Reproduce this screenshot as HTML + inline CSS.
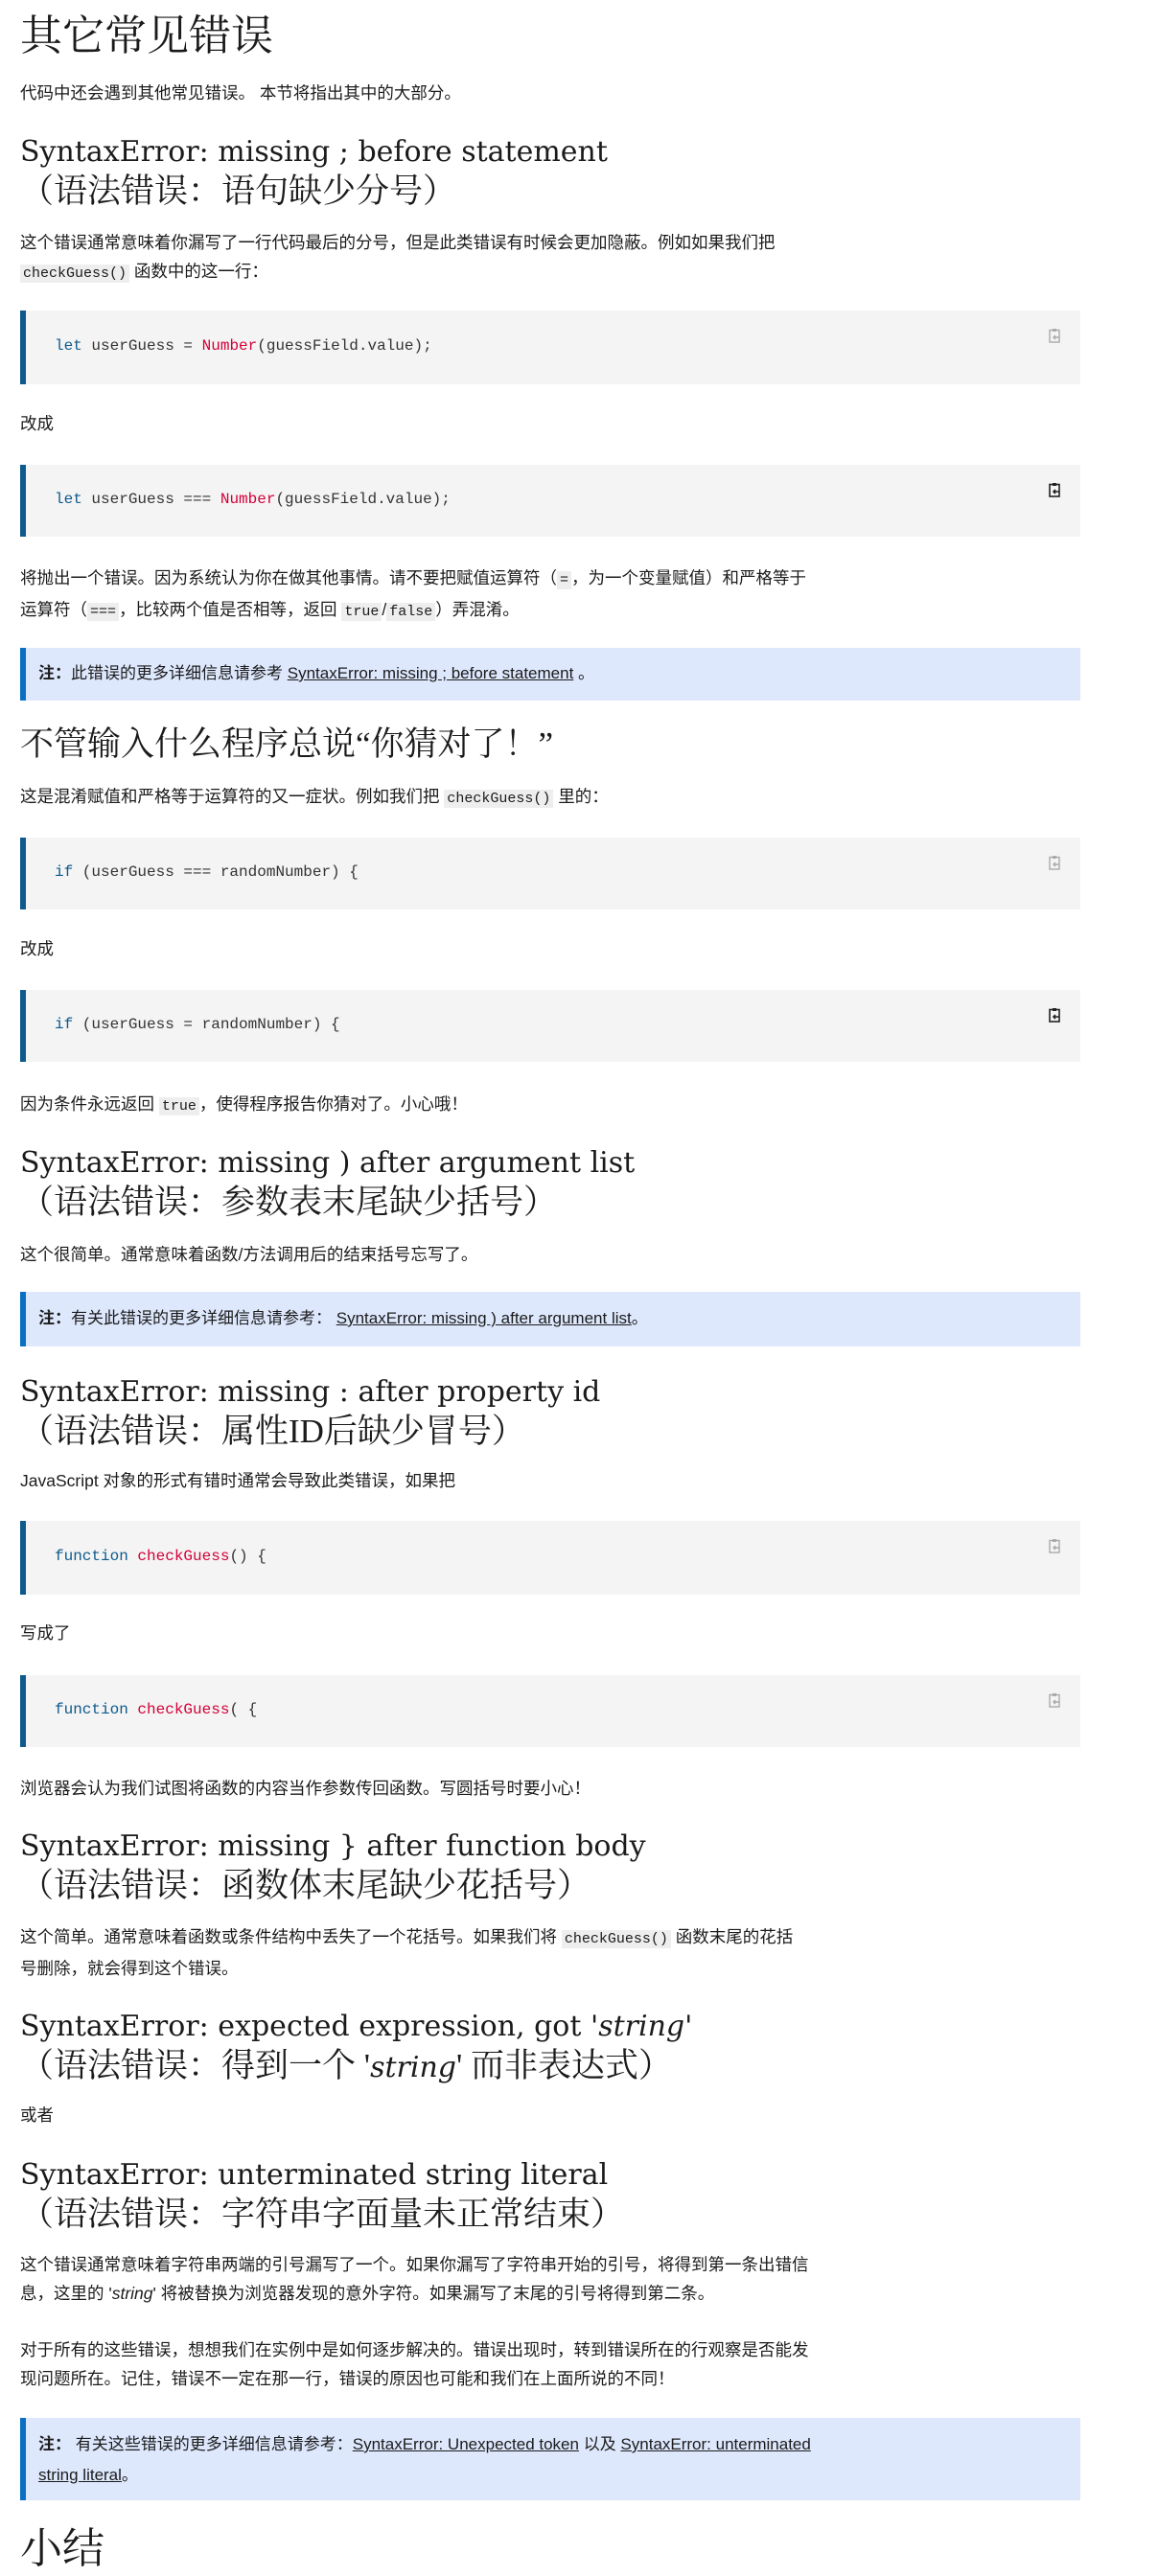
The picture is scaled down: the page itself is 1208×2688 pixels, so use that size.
<!DOCTYPE html>
<html><head><meta charset="utf-8">
<style>
*{margin:0;padding:0;box-sizing:border-box}
body{width:1208px;height:2674px;position:relative;background:#fff;overflow:hidden;color:#1b1b1b;font-family:"Liberation Sans","Noto Sans CJK SC",sans-serif}
.a{position:absolute;left:21px;white-space:nowrap}
.p{font-size:17.5px;line-height:30px}
.h2{font-family:"DejaVu Serif","Noto Serif CJK SC",serif;font-size:30px;line-height:41px;color:#1b1b1b}
.h2 .c{font-family:"Liberation Serif","Noto Serif CJK SC",serif;font-size:35px}
.h2 .c i{font-family:"DejaVu Serif",serif;font-size:30px}
.h1{font-family:"Liberation Serif","Noto Serif CJK SC",serif;font-size:44px;line-height:56px}
.code{position:absolute;left:21px;width:1106px;background:#f4f4f4;border-left:6px solid #0e5a8c}
.code span.t{position:absolute;left:30px;font-family:"Liberation Mono",monospace;font-size:16px;white-space:pre;color:#333}
.k{color:#0e5a8c}.r{color:#d30038}.f{color:#d30038}
.ic{position:absolute;right:21px;top:18px}
.note{position:absolute;left:21px;width:1106px;background:#dee8fd;border-left:6px solid #0a6fc2;font-size:17px;line-height:32px;padding-left:13px}
.note a{color:#1b1b1b;text-decoration:underline}
code{font-family:"Liberation Mono",monospace;font-size:15px;background:#eee;padding:1px 3px}
</style></head><body>

<div class="a h1" style="top:10px">其它常见错误</div>
<div class="a p" style="top:82px">代码中还会遇到其他常见错误。 本节将指出其中的大部分。</div>

<div class="a h2" style="top:138px">SyntaxError: missing ; before statement<br><span class="c">（语法错误：语句缺少分号）</span></div>
<div class="a p" style="top:238px">这个错误通常意味着你漏写了一行代码最后的分号，但是此类错误有时候会更加隐蔽。例如如果我们把<br><code>checkGuess()</code> 函数中的这一行：</div>

<div class="code" style="top:324px;height:77px"><span class="t" style="top:28px"><span class="k">let</span> userGuess = <span class="r">Number</span>(guessField.value);</span>
<svg class="ic" width="12" height="16" viewBox="0 0 12 16"><rect x="1" y="2.5" width="10" height="12.5" fill="none" stroke="#aaa" stroke-width="1.4"/><rect x="4" y="1" width="4" height="3" fill="#aaa"/><path d="M11 10H5M7 8l-2 2 2 2" stroke="#aaa" stroke-width="1.4" fill="none"/></svg></div>

<div class="a p" style="top:427px">改成</div>

<div class="code" style="top:485px;height:75px"><span class="t" style="top:27px"><span class="k">let</span> userGuess === <span class="r">Number</span>(guessField.value);</span>
<svg class="ic" width="12" height="16" viewBox="0 0 12 16"><rect x="1" y="2.5" width="10" height="12.5" fill="none" stroke="#222" stroke-width="1.6"/><rect x="4" y="1" width="4" height="3" fill="#222"/><path d="M11 10H5M7 8l-2 2 2 2" stroke="#222" stroke-width="1.6" fill="none"/></svg></div>

<div class="a p" style="top:588px">将抛出一个错误。因为系统认为你在做其他事情。请不要把赋值运算符（<code>=</code>，为一个变量赋值）和严格等于<br>运算符（<code>===</code>，比较两个值是否相等，返回 <code>true</code>/<code>false</code>）弄混淆。</div>

<div class="note" style="top:676px;height:55px;padding-top:11px"><b>注：</b>此错误的更多详细信息请参考 <a>SyntaxError: missing ; before statement</a> 。</div>

<div class="a h2" style="top:756px"><span class="c">不管输入什么程序总说“你猜对了！”</span></div>
<div class="a p" style="top:816px">这是混淆赋值和严格等于运算符的又一症状。例如我们把 <code>checkGuess()</code> 里的：</div>

<div class="code" style="top:874px;height:75px"><span class="t" style="top:27px"><span class="k">if</span> (userGuess === randomNumber) {</span>
<svg class="ic" width="12" height="16" viewBox="0 0 12 16"><rect x="1" y="2.5" width="10" height="12.5" fill="none" stroke="#aaa" stroke-width="1.4"/><rect x="4" y="1" width="4" height="3" fill="#aaa"/><path d="M11 10H5M7 8l-2 2 2 2" stroke="#aaa" stroke-width="1.4" fill="none"/></svg></div>

<div class="a p" style="top:975px">改成</div>

<div class="code" style="top:1033px;height:75px"><span class="t" style="top:27px"><span class="k">if</span> (userGuess = randomNumber) {</span>
<svg class="ic" width="12" height="16" viewBox="0 0 12 16"><rect x="1" y="2.5" width="10" height="12.5" fill="none" stroke="#222" stroke-width="1.6"/><rect x="4" y="1" width="4" height="3" fill="#222"/><path d="M11 10H5M7 8l-2 2 2 2" stroke="#222" stroke-width="1.6" fill="none"/></svg></div>

<div class="a p" style="top:1137px">因为条件永远返回 <code>true</code>，使得程序报告你猜对了。小心哦！</div>

<div class="a h2" style="top:1193px">SyntaxError: missing ) after argument list<br><span class="c">（语法错误：参数表末尾缺少括号）</span></div>
<div class="a p" style="top:1294px">这个很简单。通常意味着函数/方法调用后的结束括号忘写了。</div>

<div class="note" style="top:1348px;height:57px;padding-top:12px"><b>注：</b>有关此错误的更多详细信息请参考： <a>SyntaxError: missing ) after argument list</a>。</div>

<div class="a h2" style="top:1432px">SyntaxError: missing : after property id<br><span class="c">（语法错误：属性ID后缺少冒号）</span></div>
<div class="a p" style="top:1530px">JavaScript 对象的形式有错时通常会导致此类错误，如果把</div>

<div class="code" style="top:1587px;height:77px"><span class="t" style="top:28px"><span class="k">function</span> <span class="f">checkGuess</span>() {</span>
<svg class="ic" width="12" height="16" viewBox="0 0 12 16"><rect x="1" y="2.5" width="10" height="12.5" fill="none" stroke="#aaa" stroke-width="1.4"/><rect x="4" y="1" width="4" height="3" fill="#aaa"/><path d="M11 10H5M7 8l-2 2 2 2" stroke="#aaa" stroke-width="1.4" fill="none"/></svg></div>

<div class="a p" style="top:1689px">写成了</div>

<div class="code" style="top:1748px;height:75px"><span class="t" style="top:27px"><span class="k">function</span> <span class="f">checkGuess</span>( {</span>
<svg class="ic" width="12" height="16" viewBox="0 0 12 16"><rect x="1" y="2.5" width="10" height="12.5" fill="none" stroke="#aaa" stroke-width="1.4"/><rect x="4" y="1" width="4" height="3" fill="#aaa"/><path d="M11 10H5M7 8l-2 2 2 2" stroke="#aaa" stroke-width="1.4" fill="none"/></svg></div>

<div class="a p" style="top:1851px">浏览器会认为我们试图将函数的内容当作参数传回函数。写圆括号时要小心！</div>

<div class="a h2" style="top:1906px">SyntaxError: missing } after function body<br><span class="c">（语法错误：函数体末尾缺少花括号）</span></div>
<div class="a p" style="top:2006px">这个简单。通常意味着函数或条件结构中丢失了一个花括号。如果我们将 <code>checkGuess()</code> 函数末尾的花括<br>号删除，就会得到这个错误。</div>

<div class="a h2" style="top:2094px">SyntaxError: expected expression, got '<i>string</i>'<br><span class="c">（语法错误：得到一个 '<i>string</i>' 而非表达式）</span></div>
<div class="a p" style="top:2192px">或者</div>

<div class="a h2" style="top:2249px">SyntaxError: unterminated string literal<br><span class="c">（语法错误：字符串字面量未正常结束）</span></div>
<div class="a p" style="top:2348px">这个错误通常意味着字符串两端的引号漏写了一个。如果你漏写了字符串开始的引号，将得到第一条出错信<br>息，这里的 '<i>string</i>' 将被替换为浏览器发现的意外字符。如果漏写了末尾的引号将得到第二条。</div>

<div class="a p" style="top:2437px">对于所有的这些错误，想想我们在实例中是如何逐步解决的。错误出现时，转到错误所在的行观察是否能发<br>现问题所在。记住，错误不一定在那一行，错误的原因也可能和我们在上面所说的不同！</div>

<div class="note" style="top:2523px;height:86px;padding-top:12px"><b>注：</b> 有关这些错误的更多详细信息请参考：<a>SyntaxError: Unexpected token</a> 以及 <a>SyntaxError: unterminated</a><br><a>string literal</a>。</div>

<div class="a h1" style="top:2632px">小结</div>
</body></html>
